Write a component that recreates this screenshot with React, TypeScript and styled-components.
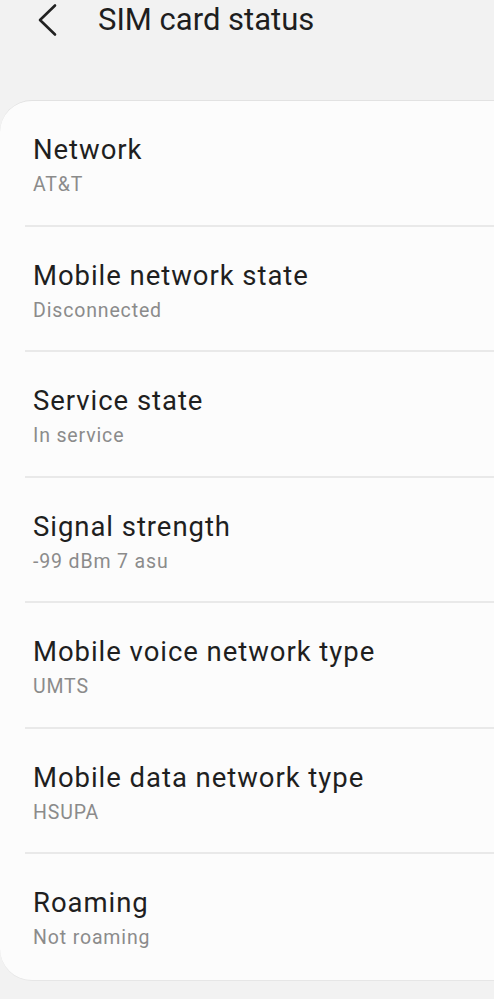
import styled, { createGlobalStyle } from 'styled-components'

const rows = [
  { title: 'Network', value: 'AT&T' },
  { title: 'Mobile network state', value: 'Disconnected' },
  { title: 'Service state', value: 'In service' },
  { title: 'Signal strength', value: '-99 dBm 7 asu' },
  { title: 'Mobile voice network type', value: 'UMTS' },
  { title: 'Mobile data network type', value: 'HSUPA' },
  { title: 'Roaming', value: 'Not roaming' },
]

const Global = createGlobalStyle`
  html, body {
    margin: 0;
    padding: 0;
    background: #f2f2f2;
    overflow: hidden;
  }
  * { box-sizing: border-box; }
`

const App = () => (
  <>
    <Global />
    <Page>
      <Header>
        <BackButton aria-label="Back">
          <svg width="24" height="34" viewBox="0 0 24 34" fill="none">
            <path d="M19 2.5 L4 17 L19 31.5" stroke="#222" strokeWidth="2.6" strokeLinecap="round" strokeLinejoin="round" />
          </svg>
        </BackButton>
        <Title>SIM card status</Title>
      </Header>
      <Card>
        {rows.map((row, i) => (
          <Row key={row.title} $last={i === rows.length - 1}>
            <RowTitle>{row.title}</RowTitle>
            <RowValue>{row.value}</RowValue>
          </Row>
        ))}
      </Card>
    </Page>
  </>
)

const Page = styled.div`
  width: 494px;
  height: 999px;
  font-family: Roboto, 'Noto Sans', sans-serif;
  overflow: hidden;
`
const Header = styled.header`
  display: flex;
  align-items: center;
  height: 40px;
  padding-left: 36px;
`
const BackButton = styled.div`
  display: flex;
  width: 24px;
  height: 34px;
  margin-right: 38px;
`
const Title = styled.h1`
  margin: 0;
  font-size: 31px;
  font-weight: 400;
  color: #1e1e1e;
  line-height: 40px;
`
const Card = styled.div`
  margin-top: 60px;
  margin-right: -40px;
  background: #fcfcfc;
  border-radius: 32px;
  border-top: 1px solid #e2e2e2;
  border-bottom: 1px solid #e6e6e6;
`
const Row = styled.div<{ $last?: boolean }>`
  position: relative;
  height: 125.5px;
  padding: 32px 0 28px 33px;

  &::after {
    content: '';
    display: ${(p) => (p.$last ? 'none' : 'block')};
    position: absolute;
    left: 25px;
    right: 0;
    bottom: 0;
    height: 2px;
    background: #e9e9e9;
  }
`
const RowTitle = styled.div`
  font-size: 27.5px;
  line-height: 34px;
  letter-spacing: 0.95px;
  color: #1f1f1f;
`
const RowValue = styled.div`
  margin-top: 5px;
  font-size: 19.5px;
  line-height: 26px;
  letter-spacing: 0.85px;
  color: #8b8b8b;
`

export default App
